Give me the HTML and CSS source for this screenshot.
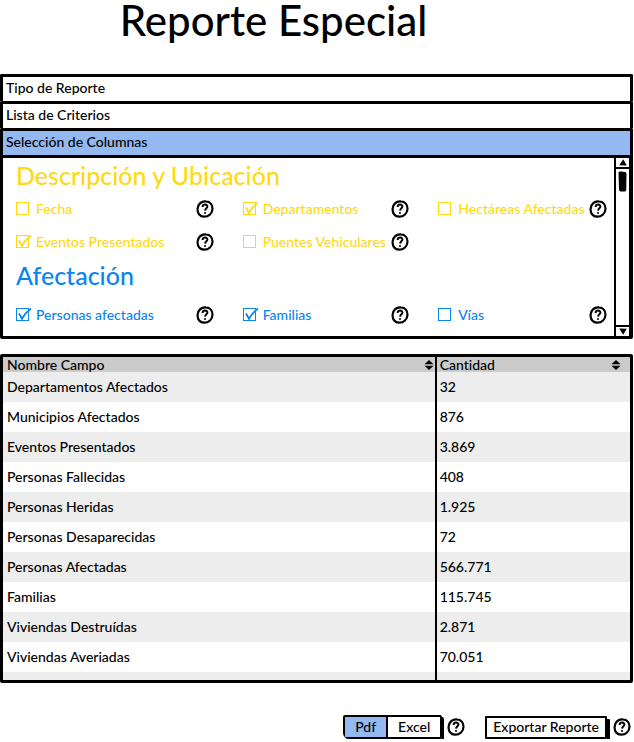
FILE: index.html
```html
<!DOCTYPE html>
<html lang="es">
<head>
<meta charset="utf-8">
<meta name="viewport" content="width=device-width, initial-scale=1">
<title>Reporte Especial</title>
<link rel="stylesheet" href="styles.css">
</head>
<body>
<svg class="defs" aria-hidden="true">
  <symbol id="help" viewBox="0 0 18 18">
    <path d="M10 1.400C5.500 .8 1.900 4.200 1.600 8.800C1.300 13.600 4.100 16.600 8 16.700C12.800 16.800 16.400 13.300 16.500 8.700C16.600 4.600 14 1.800 10 1.400Z" fill="#fff" stroke="#000" stroke-width="2.200"/>
    <path d="M6.600 7C6.700 5.300 7.700 4.600 9.100 4.600C10.600 4.600 11.500 5.500 11.400 6.700C11.300 8.200 9.200 8.500 9.100 10.600M9 12.200V13.700" fill="none" stroke="#000" stroke-width="2"/>
  </symbol>
  <symbol id="tick" viewBox="0 0 16 14">
    <path d="M3 5.500L6 10.800Q9.500 4.500 15 .6" fill="none" stroke="currentColor" stroke-width="1.800"/>
  </symbol>
  <symbol id="sort" viewBox="0 0 10 10">
    <path d="M5 0L9.500 4.200H.5ZM5 10L.5 5.800H9.500Z"/>
  </symbol>
</svg>

<main>
  <h1>Reporte Especial</h1>

  <section class="accordion">
    <button type="button" class="tab" aria-expanded="false">Tipo de Reporte</button>
    <button type="button" class="tab" aria-expanded="false">Lista de Criterios</button>
    <button type="button" class="tab" aria-expanded="true">Selección de Columnas</button>
    <div class="panel">
      <div class="groups">
        <section class="group location">
          <h2>Descripción y Ubicación</h2>
          <div class="options">
            <div class="option"><label><input type="checkbox"><svg class="tick"><use href="#tick"/></svg>Fecha</label><button type="button" class="help" aria-label="Ayuda"><svg><use href="#help"/></svg></button></div>
            <div class="option"><label><input type="checkbox" checked><svg class="tick"><use href="#tick"/></svg>Departamentos</label><button type="button" class="help" aria-label="Ayuda"><svg><use href="#help"/></svg></button></div>
            <div class="option"><label><input type="checkbox"><svg class="tick"><use href="#tick"/></svg>Hectáreas Afectadas</label><button type="button" class="help" aria-label="Ayuda"><svg><use href="#help"/></svg></button></div>
            <div class="option"><label><input type="checkbox" checked><svg class="tick"><use href="#tick"/></svg>Eventos Presentados</label><button type="button" class="help" aria-label="Ayuda"><svg><use href="#help"/></svg></button></div>
            <div class="option"><label><input type="checkbox"><svg class="tick"><use href="#tick"/></svg>Puentes Vehiculares</label><button type="button" class="help" aria-label="Ayuda"><svg><use href="#help"/></svg></button></div>
          </div>
        </section>
        <section class="group impact">
          <h2>Afectación</h2>
          <div class="options">
            <div class="option"><label><input type="checkbox" checked><svg class="tick"><use href="#tick"/></svg>Personas afectadas</label><button type="button" class="help" aria-label="Ayuda"><svg><use href="#help"/></svg></button></div>
            <div class="option"><label><input type="checkbox" checked><svg class="tick"><use href="#tick"/></svg>Familias</label><button type="button" class="help" aria-label="Ayuda"><svg><use href="#help"/></svg></button></div>
            <div class="option"><label><input type="checkbox"><svg class="tick"><use href="#tick"/></svg>Vías</label><button type="button" class="help" aria-label="Ayuda"><svg><use href="#help"/></svg></button></div>
          </div>
        </section>
      </div>
      <div class="scrollbar">
        <button type="button" class="arrow" aria-label="Subir"><svg viewBox="0 0 8 7"><path d="M4.300 .3L7.800 6.600L.2 6.300Z"/></svg></button>
        <div class="track"><svg class="thumb" viewBox="0 0 9 21"><path d="M.5 1.500Q1 .3 3 .5L7 1Q8.500 1 8.500 3L8.200 19Q8.200 20.700 6 20.600L2.500 20.500Q1 20.300 1 18Z"/></svg></div>
        <button type="button" class="arrow down" aria-label="Bajar"><svg viewBox="0 0 8 7"><path d="M.2 .5L7.800 .8L4.200 6.800Z"/></svg></button>
      </div>
    </div>
  </section>

  <div class="results">
    <table>
      <colgroup><col class="name"><col></colgroup>
      <thead>
        <tr>
          <th scope="col"><div>Nombre Campo<button type="button" class="sort" aria-label="Ordenar por nombre"><svg><use href="#sort"/></svg></button></div></th>
          <th scope="col"><div class="amount">Cantidad<button type="button" class="sort" aria-label="Ordenar por cantidad"><svg><use href="#sort"/></svg></button></div></th>
        </tr>
      </thead>
      <tbody>
        <tr><td>Departamentos Afectados</td><td>32</td></tr>
        <tr><td>Municipios Afectados</td><td>876</td></tr>
        <tr><td>Eventos Presentados</td><td>3.869</td></tr>
        <tr><td>Personas Fallecidas</td><td>408</td></tr>
        <tr><td>Personas Heridas</td><td>1.925</td></tr>
        <tr><td>Personas Desaparecidas</td><td>72</td></tr>
        <tr><td>Personas Afectadas</td><td>566.771</td></tr>
        <tr><td>Familias</td><td>115.745</td></tr>
        <tr><td>Viviendas Destruídas</td><td>2.871</td></tr>
        <tr><td>Viviendas Averiadas</td><td>70.051</td></tr>
        <tr class="filler"><td></td><td></td></tr>
      </tbody>
    </table>
  </div>

  <footer>
    <div class="formats">
      <button type="button" aria-pressed="true">Pdf</button><button type="button" aria-pressed="false">Excel</button>
    </div>
    <button type="button" class="help" aria-label="Ayuda"><svg><use href="#help"/></svg></button>
    <button type="button" class="export">Exportar Reporte</button>
    <button type="button" class="help" aria-label="Ayuda"><svg><use href="#help"/></svg></button>
  </footer>
</main>
</body>
</html>
```

FILE: styles.css
```css
* { box-sizing: border-box; }

body {
  margin: 0;
  background: #fff;
  color: #000;
  font: 500 14px/18px Lato, "Open Sans", sans-serif;
  font-variant-ligatures: none;
}

button {
  margin: 0;
  padding: 0;
  border: 0;
  background: none;
  color: inherit;
  font: inherit;
}

svg { display: block; }
.defs { position: absolute; width: 0; height: 0; }

main { padding: 0 1px 0 0; }

h1 {
  margin: 0;
  padding: 0 86px 34px 0;
  text-align: center;
  font-size: 42px;
  font-weight: 500;
  line-height: 40px;
}

/* Accordion */
.tab {
  display: block;
  width: 100%;
  height: 27px;
  padding: 0 3px 2px;
  border: 3px solid #000;
  border-bottom: 0;
  border-radius: 2px 2px 0 0;
  text-align: left;
}
.tab[aria-expanded="true"] { background: #94b9f1; }

.panel {
  display: flex;
  border: 3px solid #000;
  border-radius: 0 0 2px 2px;
}
.groups { flex: 1; padding: 0 7px 5px 13px; }

h2 {
  margin: 0;
  font-size: 25px;
  font-weight: 500;
  line-height: 34px;
}
.location { color: #ffd914; }
.impact { color: #0a84f0; }
.impact h2 { padding-bottom: 6px; }

.options {
  display: grid;
  grid-template-columns: 198fr 167fr 169fr;
  grid-auto-rows: 33px;
  column-gap: 29px;
}
.option {
  display: flex;
  align-items: center;
  justify-content: space-between;
}
.option label {
  position: relative;
  display: flex;
  align-items: center;
  gap: 7px;
  white-space: nowrap;
}
.option input {
  appearance: none;
  width: 13px;
  height: 13px;
  margin: 0;
  border: 1px solid;
  color: inherit;
}
.tick {
  position: absolute;
  left: 0;
  top: 2px;
  width: 16px;
  height: 14px;
  visibility: hidden;
}
input:checked + .tick { visibility: visible; }

.help { flex: none; }
.help svg { width: 18px; height: 18px; }

/* Scrollbar */
.scrollbar {
  display: flex;
  flex-direction: column;
  width: 16px;
  border-left: 2px solid #000;
  border-right: 1px solid #000;
}
.arrow {
  display: grid;
  place-items: center;
  height: 11px;
  border-bottom: 2px solid #000;
}
.arrow.down { border-bottom: 0; border-top: 2px solid #000; }
.arrow svg { width: 8px; height: 7px; }
.track { flex: 1; padding: 2px 0 0 2px; }
.thumb { width: 9px; height: 21px; }

/* Results */
.results {
  margin-top: 15px;
  border: 3px solid #000;
  border-radius: 2px;
}
table {
  width: 100%;
  border-collapse: collapse;
  table-layout: fixed;
}
.name { width: 69%; }
th {
  height: 15px;
  padding: 0 1px 0 4px;
  background: #cbcbcb;
  font-weight: 500;
  line-height: 15px;
}
th div {
  display: flex;
  align-items: center;
  justify-content: space-between;
}
.amount { padding-right: 8px; }
.sort svg { width: 10px; height: 10px; }
td { height: 30px; padding: 0 4px; }
td + td, th + th { padding-left: 3px; border-left: 2px solid #000; }
tbody tr:nth-child(odd) { background: #ededed; }
.filler td { height: 8px; }

/* Export actions */
footer {
  display: flex;
  justify-content: flex-end;
  align-items: center;
  padding: 32px 2px 0 0;
}
.formats {
  display: flex;
  margin-right: 5px;
  border: 2px solid #000;
  border-radius: 2px 2px 2px 6px;
  box-shadow: 2px 2px 0 #000;
}
.formats button { height: 20px; padding: 0 10px; }
.formats button + button { border-left: 2px solid #000; }
.formats button[aria-pressed="true"] { background: #94b9f1; }
.export {
  height: 23px;
  margin: 0 6px 0 20px;
  padding: 0 6px;
  border: 2px solid #000;
  border-radius: 1px;
  box-shadow: 3px 3px 0 #000;
}
```
